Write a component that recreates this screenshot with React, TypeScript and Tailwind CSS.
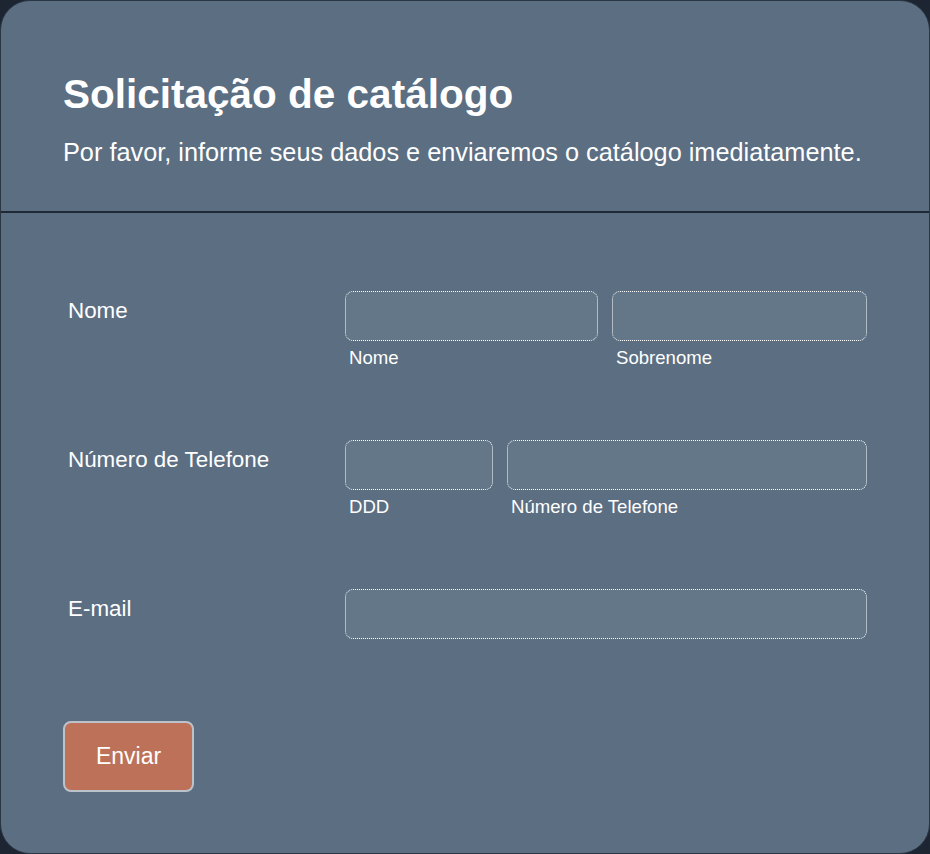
import React from "react";

const font = { fontFamily: '"Liberation Sans", Arial, sans-serif' };

function Field({ width, label }: { width: string; label?: string }) {
  return (
    <div className={`flex flex-col ${width}`}>
      <div className="h-[50px] rounded-[8px] border border-dotted border-white bg-[#647789]" />
      {label && (
        <span className="mt-[7px] pl-[4px] text-[18.6px] leading-[20px] text-white">{label}</span>
      )}
    </div>
  );
}

export default function App() {
  return (
    <div className="w-[930px] h-[854px] bg-[#1c2531]" style={font}>
      <div className="w-full h-full rounded-[30px] border border-[#2b3644] bg-[#5b6e82] overflow-hidden">
        <header className="px-[62px] pt-[70px] pb-[44px] border-b-2 border-[#1f2935]">
          <h1 className="text-[40.5px] font-bold text-white leading-[46px]">
            Solicitação de catálogo
          </h1>
          <p className="mt-[21px] text-[25.3px] text-white leading-[29px]">
            Por favor, informe seus dados e enviaremos o catálogo imediatamente.
          </p>
        </header>

        <form className="pl-[67px] pr-[62px] pt-[78px]">
          <div className="flex">
            <label className="w-[277px] pt-[7px] text-[22.4px] leading-[25px] text-white">Nome</label>
            <div className="flex flex-1 gap-[14px]">
              <Field width="w-[253px]" label="Nome" />
              <Field width="flex-1" label="Sobrenome" />
            </div>
          </div>

          <div className="flex mt-[72px]">
            <label className="w-[277px] pt-[7px] text-[22.4px] leading-[25px] text-white">
              Número de Telefone
            </label>
            <div className="flex flex-1 gap-[14px]">
              <Field width="w-[148px]" label="DDD" />
              <Field width="flex-1" label="Número de Telefone" />
            </div>
          </div>

          <div className="flex mt-[72px]">
            <label className="w-[277px] pt-[7px] text-[22.4px] leading-[25px] text-white">E-mail</label>
            <Field width="flex-1" />
          </div>

          <button
            type="button"
            className="mt-[82px] -ml-[5px] w-[131px] h-[71px] rounded-[8px] border-2 border-[#bcc2c9] bg-[#bd7159] text-[23px] text-white"
          >
            Enviar
          </button>
        </form>
      </div>
    </div>
  );
}
